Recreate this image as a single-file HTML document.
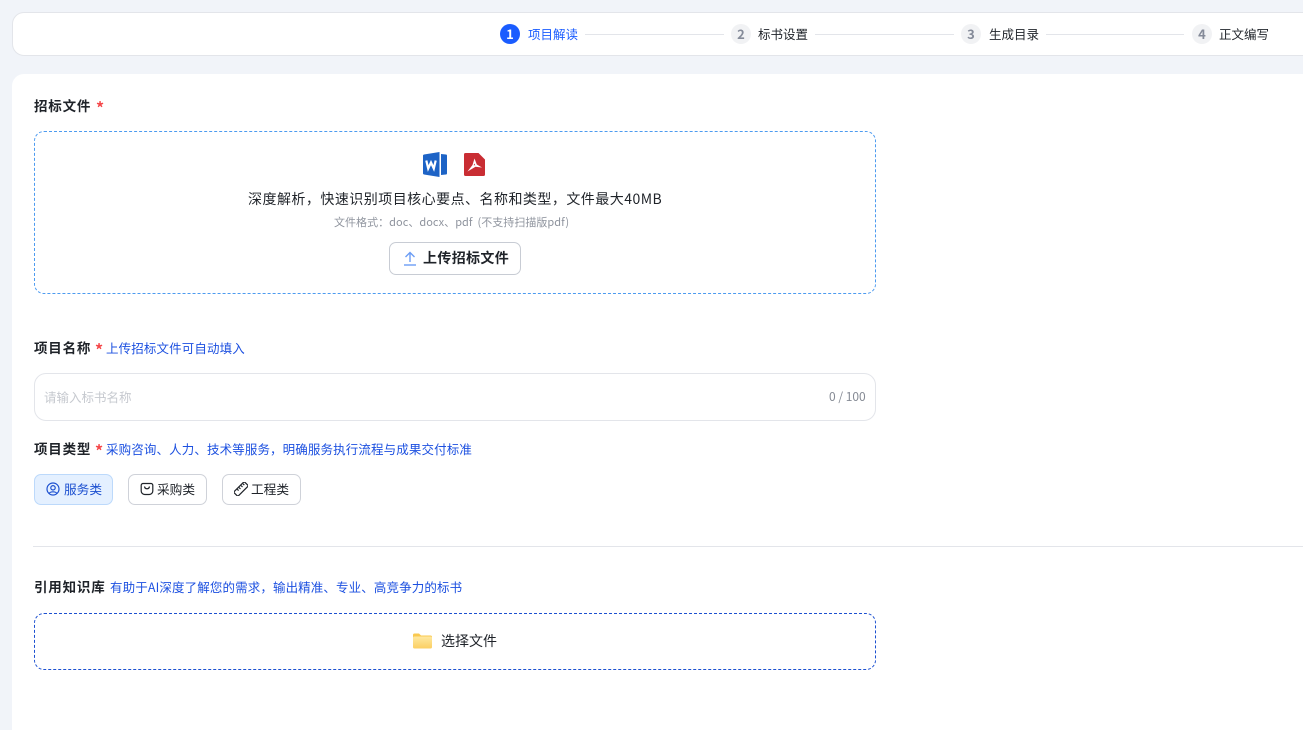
<!DOCTYPE html>
<html lang="zh-CN">
<head>
<meta charset="utf-8">
<title>项目解读</title>
<style>
html,body{margin:0;padding:0;width:1303px;height:730px;overflow:hidden;background:#f1f4f9;}
body{position:relative;font-family:"Noto Sans CJK SC","Liberation Sans",sans-serif;color:#1f2329;}
.a{position:absolute;white-space:nowrap;}
.t{line-height:20px;}
.circle{position:absolute;width:20px;height:20px;top:24px;border-radius:50%;background:#f1f2f4;color:#858b99;font-size:13px;font-weight:700;text-align:center;line-height:20px;}
.line{position:absolute;top:34px;height:1px;background:#e3e5ea;}
.step{position:absolute;top:24px;font-size:12.5px;line-height:20px;white-space:nowrap;color:#1f2329;}
.lab{font-size:13.5px;font-weight:700;color:#1f2329;letter-spacing:.8px;}
.star{position:absolute;color:#f5484a;font-weight:700;font-size:16px;line-height:20px;}
.hint{font-size:12.5px;letter-spacing:.12px;color:#1c50e0;}
.tag{position:absolute;top:474px;height:29px;border:1px solid #cfd2d9;border-radius:7px;background:#fff;}
.tag span{position:absolute;top:4px;left:29px;font-size:12.7px;line-height:20px;white-space:nowrap;}
.tag svg{position:absolute;top:7px;left:11px;}
</style>
</head>
<body>
<div class="a" style="left:12px;top:12px;width:1320px;height:42px;background:#fff;border:1px solid #e3e5ea;border-radius:12px;"></div>

<div class="circle" style="left:500px;background:#1a5cff;color:#fff;">1</div>
<div class="step" style="left:528px;color:#1a5cff;">项目解读</div>
<div class="line" style="left:585px;width:139px;"></div>
<div class="circle" style="left:731px;">2</div>
<div class="step" style="left:758px;">标书设置</div>
<div class="line" style="left:815px;width:139px;"></div>
<div class="circle" style="left:961px;">3</div>
<div class="step" style="left:989px;">生成目录</div>
<div class="line" style="left:1046px;width:138px;"></div>
<div class="circle" style="left:1192px;">4</div>
<div class="step" style="left:1219px;">正文编写</div>

<div class="a" style="left:12px;top:74px;width:1320px;height:680px;background:#fff;border-radius:12px;"></div>

<div class="a t lab" style="left:34px;top:95px;">招标文件</div>
<div class="star" style="left:96px;top:97px;">*</div>
<div class="a" style="left:34px;top:131px;width:840px;height:161px;border:1px dashed #4d9bf0;border-radius:10px;"></div>

<svg class="a" style="left:423px;top:151px;" width="25" height="27" viewBox="0 0 25 27">
<path d="M1 3.500 L16.500 1 V26 L1 23.500 Q0 23.300 0 22.500 V4.500 Q0 3.700 1 3.500 Z" fill="#1d63c6"/>
<path d="M18 3 L23 3.500 Q24 3.600 24 4.500 V22.500 Q24 23.400 23 23.500 L18 24 Z" fill="#1d63c6"/>
<path d="M3.300 9.500 L5.200 17.500 L8 11.500 L10.800 17.500 L12.700 9.500" fill="none" stroke="#fff" stroke-width="2.200"/>
</svg>
<svg class="a" style="left:464px;top:153px;" width="21" height="23" viewBox="0 0 21 23">
<path d="M1.500 0 H14.500 L21 6.500 V21.500 A1.500 1.500 0 0 1 19.500 23 H1.500 A1.500 1.500 0 0 1 0 21.500 V1.500 A1.500 1.500 0 0 1 1.500 0 Z" fill="#c92d33"/>
<path d="M10.500 5.500 L12.800 11.500 L18 14.500 L11.500 13.800 L3.500 18.500 L8.500 12 Z M10.300 10.500 L9.700 12.300 L11.300 12.300 Z" fill="#fff" fill-rule="evenodd"/>
</svg>

<div class="a t" style="left:248px;top:189px;font-size:14px;letter-spacing:.47px;color:#1f2329;">深度解析，快速识别项目核心要点、名称和类型，文件最大40MB</div>
<div class="a t" style="left:334px;top:212px;font-size:11px;letter-spacing:.03px;color:#8f949e;">文件格式：doc、docx、pdf&nbsp;&nbsp;(不支持扫描版pdf)</div>

<div class="a" style="left:389px;top:242px;width:130px;height:31px;border:1px solid #c8ccd4;border-radius:7px;background:#fff;"></div>
<svg class="a" style="left:403px;top:251px;" width="14" height="15" viewBox="0 0 14 15">
<path d="M7 11 V2 M2.500 6 L7 1.500 L11.500 6" fill="none" stroke="#6c9df5" stroke-width="1.400"/>
<path d="M1 14 H13" stroke="#6c9df5" stroke-width="1.400"/>
</svg>
<div class="a t" style="left:423px;top:248px;font-size:14px;letter-spacing:.35px;font-weight:700;color:#1f2329;">上传招标文件</div>

<div class="a t lab" style="left:34px;top:337px;">项目名称</div>
<div class="star" style="left:95px;top:339px;">*</div>
<div class="a t hint" style="left:106px;top:338px;">上传招标文件可自动填入</div>
<div class="a" style="left:34px;top:373px;width:840px;height:46px;border:1px solid #e3e5ea;border-radius:12px;background:#fff;"></div>
<div class="a t" style="left:44px;top:387px;font-size:12.500px;color:#c6c9cf;">请输入标书名称</div>
<div class="a t" style="left:829px;top:387px;font-size:12px;color:#858a94;">0 / 100</div>

<div class="a t lab" style="left:34px;top:438px;">项目类型</div>
<div class="star" style="left:95px;top:440px;">*</div>
<div class="a t hint" style="left:106px;top:439px;">采购咨询、人力、技术等服务，明确服务执行流程与成果交付标准</div>

<div class="tag" style="left:34px;width:77px;background:#e4f0ff;border-color:#bcd9fb;">
<svg width="14" height="14" viewBox="0 0 14 14" fill="none" stroke="#1c50d0" stroke-width="1.200"><circle cx="7" cy="7" r="6"/><circle cx="7" cy="5.800" r="2.200"/><path d="M3.300 11.300 C4.500 9.300 9.500 9.300 10.700 11.300"/></svg>
<span style="color:#1c50d0;">服务类</span>
</div>
<div class="tag" style="left:128px;width:77px;">
<svg width="14" height="14" viewBox="0 0 14 14" fill="none" stroke="#1f2329" stroke-width="1.200"><path d="M3 1.500 H11 A1.800 1.800 0 0 1 12.800 3.300 V9 A3.500 3.500 0 0 1 9.300 12.500 H4.700 A3.500 3.500 0 0 1 1.200 9 V3.300 A1.800 1.800 0 0 1 3 1.500 Z"/><path d="M4.500 4.500 C5 7.500 9 7.500 9.500 4.500"/></svg>
<span style="left:28px;">采购类</span>
</div>
<div class="tag" style="left:222px;width:77px;">
<svg width="14" height="14" viewBox="0 0 14 14" fill="none" stroke="#1f2329" stroke-width="1.200"><rect x="-0.500" y="4" width="15" height="6" rx="1.200" transform="rotate(-45 7 7)"/><path d="M5 5.500 L6.500 7 M7 3.500 L8.500 5 M9 1.800 L10.300 3.100 M3.300 7.300 L4.600 8.600"/></svg>
<span style="left:28px;">工程类</span>
</div>

<div class="a" style="left:33px;top:546px;width:1270px;height:1px;background:#e3e5ea;"></div>

<div class="a t lab" style="left:34px;top:576px;">引用知识库</div>
<div class="a t hint" style="left:110px;top:577px;">有助于AI深度了解您的需求，输出精准、专业、高竞争力的标书</div>
<div class="a" style="left:34px;top:613px;width:840px;height:55px;border:1px dashed #1c50d0;border-radius:10px;"></div>

<svg class="a" style="left:413px;top:633px;" width="19" height="16" viewBox="0 0 19 16">
<defs><linearGradient id="f" x1="0" y1="0" x2="0" y2="1"><stop offset="0" stop-color="#fee8a0"/><stop offset="1" stop-color="#fbcf62"/></linearGradient></defs>
<path d="M0 2 A1.500 1.500 0 0 1 1.500 .5 H6 L8 2.500 H17.500 A1.500 1.500 0 0 1 19 4 V6 H0 Z" fill="#f9c84f"/>
<rect x="0" y="3.500" width="19" height="12" rx="1.500" fill="url(#f)"/>
</svg>
<div class="a t" style="left:441px;top:631px;font-size:14px;color:#1f2329;">选择文件</div>
</body>
</html>
